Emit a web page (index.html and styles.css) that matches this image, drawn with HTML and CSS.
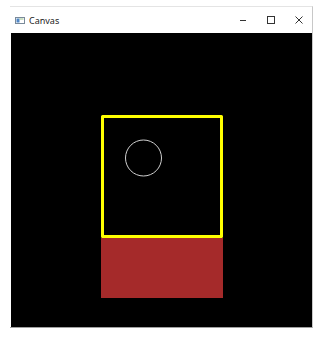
FILE: index.html
```html
<!DOCTYPE html>
<html lang="en">
<head>
    <meta charset="UTF-8">
    <title>Canvas</title>
    <link rel="stylesheet" href="styles.css">
</head>
<body>

    <div class="window">
        <!-- title bar -->
        <div class="titlebar">
            <svg class="app-icon" width="10" height="7" viewBox="0 0 10 7">
                <rect x="0.5" y="0.5" width="9" height="6" fill="#fff" stroke="#7a8a9a"/>
                <rect x="1.5" y="1.5" width="3" height="4" fill="#4f86c6"/>
                <rect x="4.5" y="1.5" width="4" height="1" fill="#9cc38c"/>
            </svg>
            <span class="title">Canvas</span>
            <div class="controls">
                <svg width="10" height="10" viewBox="0 0 10 10"><line x1="2" y1="5.5" x2="8" y2="5.5" stroke="#333" stroke-width="1"/></svg>
                <svg width="10" height="10" viewBox="0 0 10 10"><rect x="1.5" y="1.5" width="7" height="7" fill="none" stroke="#333"/></svg>
                <svg width="10" height="10" viewBox="0 0 10 10"><path d="M1.5 1.5 L8.5 8.5 M8.5 1.5 L1.5 8.5" stroke="#333" stroke-width="1"/></svg>
            </div>
        </div>

        <!-- drawing area -->
        <div class="canvas">
            <svg width="301" height="294" viewBox="0 0 301 294">
                <rect x="90" y="205" width="122" height="60" fill="#a52a2a"/>
                <rect x="91.5" y="83.5" width="119" height="120" fill="none" stroke="#ffff00" stroke-width="3" stroke-linejoin="round"/>
                <circle cx="132.5" cy="125" r="18" fill="none" stroke="#d0d0d0" stroke-width="1"/>
            </svg>
        </div>
    </div>

</body>
</html>
```

FILE: styles.css
```css
body { margin: 0; background: #ffffff; font-family: "Noto Sans", "Liberation Sans", sans-serif; }

.window { margin: 6px 0 0 10px; width: 302px; border-top: 1px solid #e4e4e4; border-right: 1px solid #c8c8c8; border-bottom: 1px solid #a0a0a0; }

/* title bar */
.titlebar { height: 26px; display: flex; align-items: center; background: #ffffff; padding-left: 5px; }
.app-icon { margin-right: 4px; }
.title { font-size: 9px; color: #222; }
.controls { margin-left: auto; display: flex; gap: 18px; padding-right: 8px; }

/* drawing area */
.canvas { background: #000000; height: 294px; margin-left: 1px; }
.canvas svg { display: block; }
```
